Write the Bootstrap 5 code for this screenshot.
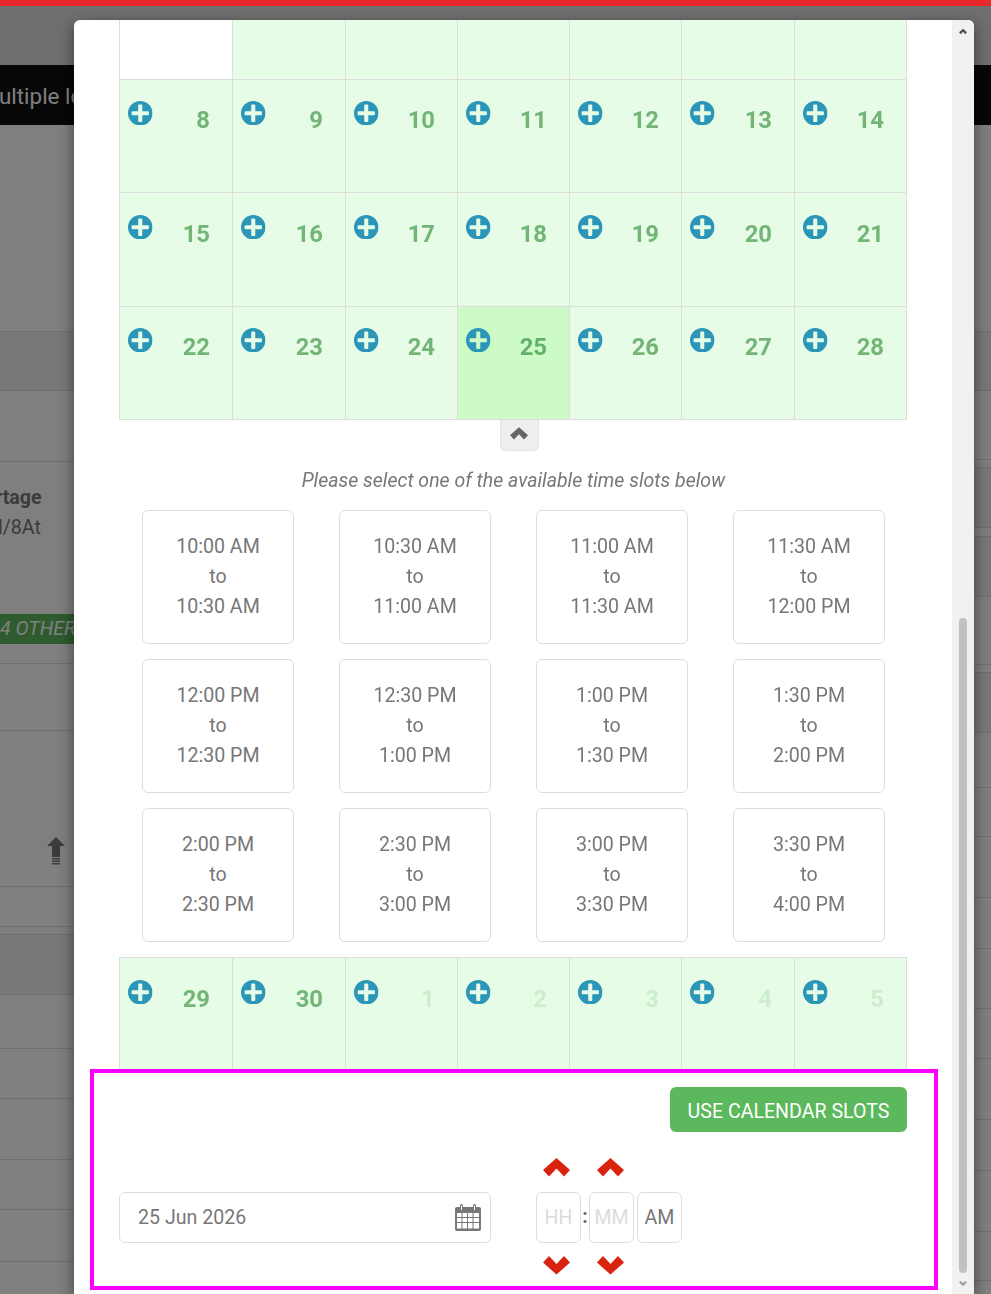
<!DOCTYPE html>
<html lang="en">
<head>
<meta charset="utf-8">
<title>Calendar slots</title>
<link href="https://cdn.jsdelivr.net/npm/bootstrap@5.3.0/dist/css/bootstrap.min.css" rel="stylesheet">
<style>
html,body{margin:0;height:1294px;overflow:hidden;background:#fff;font-family:Roboto,"Liberation Sans",sans-serif;font-size:19.6px;color:#777}
.topbar{height:6px;background:#e9262a;position:relative;z-index:1060}
.greystrip{height:59px;background:#dedede}
.blackband{height:60px;background:#0e0e0e;color:#fff;font-size:22.4px;line-height:63px;white-space:nowrap;overflow:hidden;text-indent:-1px}
.sidel{width:74px;overflow:hidden;white-space:nowrap;color:#777}
.sider{width:17px;overflow:hidden}
.bgrow{border-bottom:1px solid #dcdcdc;overflow:hidden}
.bgrow.dark{background:#f0f0f0}
.r207{height:207px}.r59{height:59px}.r71{height:71px}.r202{height:202px}.r67{height:67px}.r156{height:156px}.r40{height:40px}.r8{height:8px}.r60{height:60px}.r54{height:54px}.r50{height:50px}.r61{height:61px}.r52{height:52px}.r69{height:69px}.r9{height:9px}.r68{height:68px}.r55{height:55px}.r49{height:49px}.r51{height:51px}
.cellpad{padding-top:21px;line-height:30px}
.bgbold{font-weight:700;margin-left:-5px}
.bgplain{margin-left:-2px}
.greenband{margin-top:71px;height:30px;background:#5cb85c;color:#fff;font-style:italic;line-height:29px}
.arrowwrap{padding:106px 0 0 47px;line-height:0}
.sheet{position:absolute;left:74px;top:20px;width:900px;height:1274px;z-index:1060;background:#fff;border-radius:6px 6px 0 0;box-shadow:0 5px 15px rgba(0,0,0,.5);overflow:hidden}
.sheetmain{width:878px;overflow:hidden}
.calwrap{padding:0 45px}
table.cal{width:788px;margin:0;table-layout:fixed;border-collapse:collapse;--bs-table-bg:transparent}
table.cal col.wide{width:113px}
table.cal col.narrow{width:112px}
table.cal td{padding:0;border:1px solid #dddddd;background:#e6fce6;height:113px;vertical-align:top}
table.cal td.blank{background:#fff}
table.cal td.today{background:#ccfbc8}
table.cal tr.firstcut td{height:59px;border-top:0}
table.cal tr.tallrow td{height:114px}
.daycell{padding:21px 22px 0 8px}
.tallrow .daycell,.lastrow .daycell{padding-top:22px}
.plusicon{width:24.500px;height:24.500px;display:block;flex:none}
.daynum{font-size:23.800px;line-height:34px;font-weight:700;color:#73b577;margin-top:2px}
.today .daynum{color:#66af69}
.daynum.faded{color:#cdeccd}
.togglebtn{width:39px;height:31px;margin-left:381px;background:#eee;border:1px solid #e3e3e3;border-top:0;border-radius:0 0 6px 6px;padding:7px 0 0 9px;line-height:0}
.hinttext{margin:15px 0 14px;padding-left:1px;text-align:center;font-style:italic;line-height:30px;font-size:19.500px;color:#777;white-space:nowrap}
.slotgrid{display:grid;grid-template-columns:repeat(4,152px);column-gap:45px;row-gap:15px;padding:0 23px;margin-bottom:15px}
.slotcard{height:134px;border:1px solid #ddd;border-radius:6px;padding:21px 0;text-align:center;line-height:30px;color:#777;--bs-card-border-color:#ddd}
.footerbox{margin:-2px 14px 0 16px;height:221px;border:4px solid #f0f;background:#fff;padding:14px 27px 0 25px;position:relative}
.usebtn{width:237px;height:45px;padding:0;background:#5cb85c;border:0;border-radius:6px;color:#fff;font-size:19.600px;line-height:49px;white-space:nowrap;--bs-btn-hover-bg:#5cb85c}
.formrow{margin-top:26px}
.datefield{width:372px;height:51px;margin-top:34px;border:1px solid #ddd;border-radius:6px;padding:0 9px 0 18px;color:#777;font-size:19.600px}
.datetext{padding-top:2px}
.timegroup{margin-left:45px;gap:0}
.timecol{width:45px}
.upchev{width:27px;height:19px;display:block;margin:0 0 15px 7px}
.downchev{width:27px;height:19px;display:block;margin:13px 0 0 7px}
.minutechev{margin-left:8px}
.timebox{height:51px;border:1px solid #ddd;border-radius:6px;line-height:49px;text-align:center;color:#777;font-size:19.600px;white-space:nowrap}
.timebox.ph{color:#dcdcdc}
.colon{width:8px;margin-top:34px;line-height:49px;text-align:center;font-weight:700;color:#666}
.ampm{width:45px;margin:34px 0 0 3px}
.fakebar{width:22px;background:#f1f1f1;flex:none}
.barup{height:17px;padding:8px 0 0 7px;line-height:0}
.barthumb{width:8px;height:655px;margin:581px 0 0 7px;background:#c1c1c1;border-radius:4px}
.bardown{padding:7px 0 0 7px;line-height:0}
</style>
</head>
<body>
<svg class="d-none" aria-hidden="true">
  <symbol id="plus" viewBox="0 0 24 24"><path fill="#2b96b8" fill-rule="evenodd" d="M12 0a12 12 0 1 1 0 24a12 12 0 0 1 0-24zM11 3.500a1 1 0 0 0-1 1V10H4.500a1 1 0 0 0-1 1v2a1 1 0 0 0 1 1H10v5.500a1 1 0 0 0 1 1h2a1 1 0 0 0 1-1V14h5.500a1 1 0 0 0 1-1v-2a1 1 0 0 0-1-1H14V4.500a1 1 0 0 0-1-1z"/></symbol>
  <symbol id="chevup" viewBox="0 0 27 19"><path d="M0 12L6 18.500L13.500 10.500L21 18.500L27 12L13.500 0z"/></symbol>
  <symbol id="chevdown" viewBox="0 0 27 19"><path d="M0 6.500L6 0L13.500 8L21 0L27 6.500L13.500 18.500z"/></symbol>
</svg>

<div class="topbar"></div>
<div class="greystrip"></div>
<div class="blackband">ultiple lo</div>
<div class="d-flex justify-content-between">
  <div class="sidel">
    <div class="bgrow r207"></div>
    <div class="bgrow r59 dark"></div>
    <div class="bgrow r71"></div>
    <div class="bgrow r202 cellpad"><div class="bgbold">rtage</div><div class="bgplain">l/8At</div><div class="greenband">4 OTHER</div></div>
    <div class="bgrow r67"></div>
    <div class="bgrow r156 arrowwrap">
      <svg width="18" height="28" viewBox="0 0 18 28" fill="#777"><path d="M9 0L18 9H13V20H5V9H0z"/><rect x="5" y="21" width="8" height="1.500"/><rect x="5" y="23.500" width="8" height="1.500"/><rect x="5" y="26" width="8" height="1.500"/></svg>
    </div>
    <div class="bgrow r40"></div>
    <div class="bgrow r8"></div>
    <div class="bgrow r60 dark"></div>
    <div class="bgrow r54"></div>
    <div class="bgrow r50"></div>
    <div class="bgrow r61"></div>
    <div class="bgrow r50"></div>
    <div class="bgrow r52"></div>
  </div>
  <div class="sider">
    <div class="bgrow r207"></div>
    <div class="bgrow r59 dark"></div>
    <div class="bgrow r69"></div>
    <div class="bgrow r8"></div>
    <div class="bgrow r60 dark"></div>
    <div class="bgrow r9"></div>
    <div class="bgrow r60 dark"></div>
    <div class="bgrow r68"></div>
    <div class="bgrow r8"></div>
    <div class="bgrow r60 dark"></div>
    <div class="bgrow r55"></div>
    <div class="bgrow r49"></div>
    <div class="bgrow r61"></div>
    <div class="bgrow r51"></div>
    <div class="bgrow r60"></div>
    <div class="bgrow r50"></div>
    <div class="bgrow r61"></div>
    <div class="bgrow r51"></div>
    <div class="bgrow r61"></div>
    <div class="bgrow r49"></div>
  </div>
</div>

<div class="modal-backdrop show"></div>

<div class="sheet d-flex">
  <div class="sheetmain">
    <div class="calwrap">
      <table class="table cal">
        <colgroup><col class="wide"><col class="wide"><col class="narrow"><col class="narrow"><col class="narrow"><col class="wide"><col class="narrow"></colgroup>
        <tbody>
          <tr class="firstcut"><td class="blank"></td><td></td><td></td><td></td><td></td><td></td><td></td></tr>
          <tr>
            <td><div class="daycell d-flex justify-content-between"><svg class="plusicon"><use href="#plus"/></svg><span class="daynum">8</span></div></td>
            <td><div class="daycell d-flex justify-content-between"><svg class="plusicon"><use href="#plus"/></svg><span class="daynum">9</span></div></td>
            <td><div class="daycell d-flex justify-content-between"><svg class="plusicon"><use href="#plus"/></svg><span class="daynum">10</span></div></td>
            <td><div class="daycell d-flex justify-content-between"><svg class="plusicon"><use href="#plus"/></svg><span class="daynum">11</span></div></td>
            <td><div class="daycell d-flex justify-content-between"><svg class="plusicon"><use href="#plus"/></svg><span class="daynum">12</span></div></td>
            <td><div class="daycell d-flex justify-content-between"><svg class="plusicon"><use href="#plus"/></svg><span class="daynum">13</span></div></td>
            <td><div class="daycell d-flex justify-content-between"><svg class="plusicon"><use href="#plus"/></svg><span class="daynum">14</span></div></td>
          </tr>
          <tr class="tallrow">
            <td><div class="daycell d-flex justify-content-between"><svg class="plusicon"><use href="#plus"/></svg><span class="daynum">15</span></div></td>
            <td><div class="daycell d-flex justify-content-between"><svg class="plusicon"><use href="#plus"/></svg><span class="daynum">16</span></div></td>
            <td><div class="daycell d-flex justify-content-between"><svg class="plusicon"><use href="#plus"/></svg><span class="daynum">17</span></div></td>
            <td><div class="daycell d-flex justify-content-between"><svg class="plusicon"><use href="#plus"/></svg><span class="daynum">18</span></div></td>
            <td><div class="daycell d-flex justify-content-between"><svg class="plusicon"><use href="#plus"/></svg><span class="daynum">19</span></div></td>
            <td><div class="daycell d-flex justify-content-between"><svg class="plusicon"><use href="#plus"/></svg><span class="daynum">20</span></div></td>
            <td><div class="daycell d-flex justify-content-between"><svg class="plusicon"><use href="#plus"/></svg><span class="daynum">21</span></div></td>
          </tr>
          <tr>
            <td><div class="daycell d-flex justify-content-between"><svg class="plusicon"><use href="#plus"/></svg><span class="daynum">22</span></div></td>
            <td><div class="daycell d-flex justify-content-between"><svg class="plusicon"><use href="#plus"/></svg><span class="daynum">23</span></div></td>
            <td><div class="daycell d-flex justify-content-between"><svg class="plusicon"><use href="#plus"/></svg><span class="daynum">24</span></div></td>
            <td class="today"><div class="daycell d-flex justify-content-between"><svg class="plusicon"><use href="#plus"/></svg><span class="daynum">25</span></div></td>
            <td><div class="daycell d-flex justify-content-between"><svg class="plusicon"><use href="#plus"/></svg><span class="daynum">26</span></div></td>
            <td><div class="daycell d-flex justify-content-between"><svg class="plusicon"><use href="#plus"/></svg><span class="daynum">27</span></div></td>
            <td><div class="daycell d-flex justify-content-between"><svg class="plusicon"><use href="#plus"/></svg><span class="daynum">28</span></div></td>
          </tr>
        </tbody>
      </table>
      <div class="togglebtn"><svg width="18" height="13" fill="#666"><use href="#chevup"/></svg></div>
      <div class="hinttext">Please select one of the available time slots below</div>
      <div class="slotgrid">
        <div class="card slotcard">10:00 AM<br>to<br>10:30 AM</div>
        <div class="card slotcard">10:30 AM<br>to<br>11:00 AM</div>
        <div class="card slotcard">11:00 AM<br>to<br>11:30 AM</div>
        <div class="card slotcard">11:30 AM<br>to<br>12:00 PM</div>
        <div class="card slotcard">12:00 PM<br>to<br>12:30 PM</div>
        <div class="card slotcard">12:30 PM<br>to<br>1:00 PM</div>
        <div class="card slotcard">1:00 PM<br>to<br>1:30 PM</div>
        <div class="card slotcard">1:30 PM<br>to<br>2:00 PM</div>
        <div class="card slotcard">2:00 PM<br>to<br>2:30 PM</div>
        <div class="card slotcard">2:30 PM<br>to<br>3:00 PM</div>
        <div class="card slotcard">3:00 PM<br>to<br>3:30 PM</div>
        <div class="card slotcard">3:30 PM<br>to<br>4:00 PM</div>
      </div>
      <table class="table cal">
        <colgroup><col class="wide"><col class="wide"><col class="narrow"><col class="narrow"><col class="narrow"><col class="wide"><col class="narrow"></colgroup>
        <tbody>
          <tr class="lastrow">
            <td><div class="daycell d-flex justify-content-between"><svg class="plusicon"><use href="#plus"/></svg><span class="daynum">29</span></div></td>
            <td><div class="daycell d-flex justify-content-between"><svg class="plusicon"><use href="#plus"/></svg><span class="daynum">30</span></div></td>
            <td><div class="daycell d-flex justify-content-between"><svg class="plusicon"><use href="#plus"/></svg><span class="daynum faded">1</span></div></td>
            <td><div class="daycell d-flex justify-content-between"><svg class="plusicon"><use href="#plus"/></svg><span class="daynum faded">2</span></div></td>
            <td><div class="daycell d-flex justify-content-between"><svg class="plusicon"><use href="#plus"/></svg><span class="daynum faded">3</span></div></td>
            <td><div class="daycell d-flex justify-content-between"><svg class="plusicon"><use href="#plus"/></svg><span class="daynum faded">4</span></div></td>
            <td><div class="daycell d-flex justify-content-between"><svg class="plusicon"><use href="#plus"/></svg><span class="daynum faded">5</span></div></td>
          </tr>
        </tbody>
      </table>
    </div>
    <div class="footerbox">
      <div class="d-flex justify-content-end"><button type="button" class="btn usebtn">USE CALENDAR SLOTS</button></div>
      <div class="d-flex align-items-start formrow">
        <div class="datefield d-flex align-items-center justify-content-between">
          <span class="datetext">25 Jun 2026</span>
          <svg width="26" height="27" viewBox="0 0 26 27" aria-hidden="true"><path fill="#777" d="M2 3H5V1.500a1.500 1.500 0 0 1 3 0V3H18V1.500a1.500 1.500 0 0 1 3 0V3H24a2 2 0 0 1 2 2V25a2 2 0 0 1-2 2H2a2 2 0 0 1-2-2V5a2 2 0 0 1 2-2z"/><path fill="#fff" d="M6 1.500h1V6H6zM19 1.500h1V6h-1z"/><path fill="#fff" d="M2 9h4.500v4H2zM7.500 9H12v4H7.500zM13 9h4.500v4H13zM18.500 9H24v4h-5.500zM2 14h4.500v4H2zM7.500 14H12v4H7.500zM13 14h4.500v4H13zM18.500 14H24v4h-5.500zM2 19h4.500v5.500H2zM7.500 19H12v5.500H7.500zM13 19h4.500v5.500H13zM18.500 19H24v5.500h-5.500z"/></svg>
        </div>
        <div class="d-flex timegroup">
          <div class="timecol">
            <svg class="upchev" fill="#d9230f"><use href="#chevup"/></svg>
            <div class="timebox ph">HH</div>
            <svg class="downchev" fill="#d9230f"><use href="#chevdown"/></svg>
          </div>
          <div class="colon">:</div>
          <div class="timecol">
            <svg class="upchev minutechev" fill="#d9230f"><use href="#chevup"/></svg>
            <div class="timebox ph">MM</div>
            <svg class="downchev minutechev" fill="#d9230f"><use href="#chevdown"/></svg>
          </div>
          <div class="timebox ampm">AM</div>
        </div>
      </div>
    </div>
  </div>
  <div class="fakebar">
    <div class="barup"><svg width="8" height="7" viewBox="0 0 27 19" fill="#505050"><use href="#chevup"/></svg></div>
    <div class="barthumb"></div>
    <div class="bardown"><svg width="8" height="7" viewBox="0 0 27 19" fill="#a3a3a3"><use href="#chevdown"/></svg></div>
  </div>
</div>
<script src="https://cdn.jsdelivr.net/npm/bootstrap@5.3.0/dist/js/bootstrap.bundle.min.js"></script>
</body>
</html>
